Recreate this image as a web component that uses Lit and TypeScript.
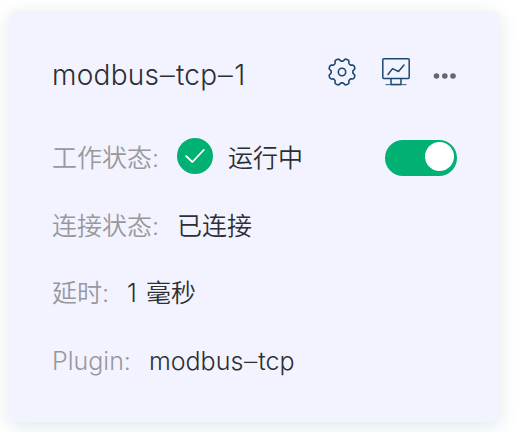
import { LitElement, html, css, svg } from "lit";
import { customElement, property } from "lit/decorators.js";

const gearPath = (() => {
  const points: string[] = [];
  const steps = 160;
  for (let i = 0; i < steps; i++) {
    const a = (i / steps) * Math.PI * 2;
    const wave = Math.tanh(2 * (Math.cos(8 * (a - Math.PI / 8)) + 0.15));
    const r = 12.1 + 1.35 * wave;
    points.push(`${(14 + r * Math.cos(a)).toFixed(2)} ${(14 + r * Math.sin(a)).toFixed(2)}`);
  }
  return `M${points.join("L")}Z`;
})();

@customElement("node-name")
export class NodeName extends LitElement {
  @property() name = "";

  static styles = css`
    :host { display: inline-block; white-space: nowrap; }
    .dash {
      display: inline-block;
      width: 0.6em;
      text-align: center;
    }
    .stroke { display: inline-block; transform: translateY(0.01em) scale(1.75, 0.9); }
  `;

  render() {
    return this.name.split(/(-)/).map((part) =>
      part === "-" ? html`<span class="dash"><span class="stroke">-</span></span>` : part
    );
  }
}

@customElement("app-root")
export class AppRoot extends LitElement {
  static styles = css`
    :host {
      display: block;
      box-sizing: border-box;
      height: 432px;
      padding: 11px 18px 10px 9px;
      overflow: hidden;
      background: #fff;
      color: #2c2f33;
      font-family: Inter, "Noto Sans CJK SC", sans-serif;
      font-size: 25px;
      font-weight: 350;
    }
    .card {
      box-sizing: border-box;
      height: 411px;
      padding: 30px 43px 0;
      border-radius: 8px;
      background: #f2f3ff;
      box-shadow: 0 4px 18px rgba(30, 105, 105, 0.15);
    }
    .head {
      display: flex;
      align-items: center;
      height: 68px;
      margin-bottom: 15px;
    }
    .title { flex: 1; font-size: 28px; line-height: 40px; letter-spacing: 0.25px; }
    .actions { display: flex; align-items: center; }
    .gear { width: 28px; height: 28px; margin: 0 26px 7px 0; }
    .monitor { width: 28px; height: 28px; margin: 0 23px 7px 0; }
    .more { width: 24px; height: 8px; margin-top: 1px; }
    svg { display: block; fill: none; stroke: #1d4770; }
    .more { fill: #65666b; stroke: none; }
    .row {
      display: flex;
      align-items: center;
      height: 67.6px;
      line-height: 36px;
      white-space: nowrap;
    }
    .label { color: #98989c; margin-right: 18px; }
    .link { padding-top: 1px; }
    .row.link { box-sizing: border-box; padding-top: 2px; }
    .badge {
      display: grid;
      place-items: center;
      width: 36px;
      height: 36px;
      margin: 0 15px 3px 0;
      border-radius: 50%;
      background: #00b173;
    }
    .badge svg { width: 20px; height: 16px; stroke: #fff; }
    .switch {
      box-sizing: border-box;
      display: flex;
      justify-content: flex-end;
      width: 72px;
      height: 36px;
      margin: 0 0 0 auto;
      padding: 2px 3px;
      border-radius: 18px;
      background: #00b173;
    }
    .knob { width: 29px; height: 29px; border-radius: 50%; background: #fff; }
    .latency { word-spacing: 2px; }
  `;

  render() {
    return html`
      <section class="card">
        <header class="head">
          <node-name class="title" .name=${"modbus-tcp-1"}></node-name>
          <div class="actions">
            <svg class="gear" viewBox="0 0 28 28" stroke-width="1.6">
              ${svg`<path d=${gearPath}></path>`}
              <circle cx="14" cy="14" r="3.7"></circle>
            </svg>
            <svg class="monitor" viewBox="0 0 28 28" stroke-width="1.5">
              <rect x="0.8" y="0.8" width="26.4" height="19.6" rx="1"></rect>
              <path d="M6 16.5 10.5 10.6 16.5 13.5 22 7" stroke-linecap="round" stroke-linejoin="round"></path>
              <path d="M9 20.4V26.4M19 20.4V26.4M9 26.4H19"></path>
              <path d="M3.5 26.6H24.5" stroke-width="1.2" opacity="0.75"></path>
            </svg>
            <svg class="more" viewBox="0 0 24 8">
              <circle cx="3.5" cy="4" r="2.8"></circle>
              <circle cx="11.8" cy="4" r="2.8"></circle>
              <circle cx="20" cy="4" r="2.8"></circle>
            </svg>
          </div>
        </header>
        <div class="row">
          <span class="label">工作状态:</span>
          <span class="badge">
            <svg viewBox="0 0 20 16" stroke-width="1.8">
              <path d="M1.2 8.2 7.4 14 18.7 2" stroke-linecap="round" stroke-linejoin="round"></path>
            </svg>
          </span>
          <span>运行中</span>
          <span class="switch" role="switch" aria-checked="true"><span class="knob"></span></span>
        </div>
        <div class="row link"><span class="label">连接状态:</span><span>已连接</span></div>
        <div class="row"><span class="label">延时:</span><span class="latency">1 毫秒</span></div>
        <div class="row"><span class="label">Plugin:</span><node-name .name=${"modbus-tcp"}></node-name></div>
      </section>
    `;
  }
}
